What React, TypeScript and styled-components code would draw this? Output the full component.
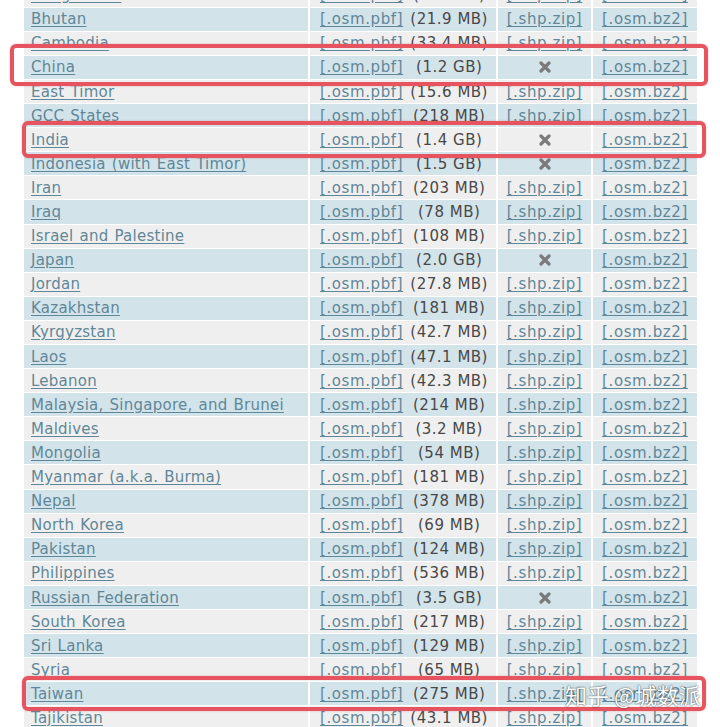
import React from "react";
import styled, { createGlobalStyle } from "styled-components";

interface Region {
  name: string;
  size: string;
  shp: boolean;
}

const regions: Region[] = [
  { name: "Bangladesh", size: "(240 MB)", shp: true },
  { name: "Bhutan", size: "(21.9 MB)", shp: true },
  { name: "Cambodia", size: "(33.4 MB)", shp: true },
  { name: "China", size: "(1.2 GB)", shp: false },
  { name: "East Timor", size: "(15.6 MB)", shp: true },
  { name: "GCC States", size: "(218 MB)", shp: true },
  { name: "India", size: "(1.4 GB)", shp: false },
  { name: "Indonesia (with East Timor)", size: "(1.5 GB)", shp: false },
  { name: "Iran", size: "(203 MB)", shp: true },
  { name: "Iraq", size: "(78 MB)", shp: true },
  { name: "Israel and Palestine", size: "(108 MB)", shp: true },
  { name: "Japan", size: "(2.0 GB)", shp: false },
  { name: "Jordan", size: "(27.8 MB)", shp: true },
  { name: "Kazakhstan", size: "(181 MB)", shp: true },
  { name: "Kyrgyzstan", size: "(42.7 MB)", shp: true },
  { name: "Laos", size: "(47.1 MB)", shp: true },
  { name: "Lebanon", size: "(42.3 MB)", shp: true },
  { name: "Malaysia, Singapore, and Brunei", size: "(214 MB)", shp: true },
  { name: "Maldives", size: "(3.2 MB)", shp: true },
  { name: "Mongolia", size: "(54 MB)", shp: true },
  { name: "Myanmar (a.k.a. Burma)", size: "(181 MB)", shp: true },
  { name: "Nepal", size: "(378 MB)", shp: true },
  { name: "North Korea", size: "(69 MB)", shp: true },
  { name: "Pakistan", size: "(124 MB)", shp: true },
  { name: "Philippines", size: "(536 MB)", shp: true },
  { name: "Russian Federation", size: "(3.5 GB)", shp: false },
  { name: "South Korea", size: "(217 MB)", shp: true },
  { name: "Sri Lanka", size: "(129 MB)", shp: true },
  { name: "Syria", size: "(65 MB)", shp: true },
  { name: "Taiwan", size: "(275 MB)", shp: true },
  { name: "Tajikistan", size: "(43.1 MB)", shp: true },
];

// red annotation boxes drawn over the screenshot
const marks = [
  { left: 10, top: 44, width: 698, height: 42 },
  { left: 22, top: 121, width: 684, height: 37 },
  { left: 22, top: 676, width: 684, height: 35 },
];

const NoIcon: React.FC = () => (
  <svg width="12" height="12" viewBox="0 0 12 12">
    <path
      d="M2 2 L10 10 M10 2 L2 10"
      stroke="#7a7a7a"
      strokeWidth="3.2"
      strokeLinecap="round"
    />
  </svg>
);

const App: React.FC = () => {
  return (
    <>
      <GlobalStyle />
      <Page>
        <StyledTable>
          <colgroup>
            <col style={{ width: 284 }} />
            <col style={{ width: 186 }} />
            <col style={{ width: 93 }} />
            <col style={{ width: 104 }} />
          </colgroup>
          <tbody>
            {regions.map((r, i) => (
              <Row key={r.name} blue={i % 2 === 1}>
                <NameCell>
                  <Link href="#">{r.name}</Link>
                </NameCell>
                <td>
                  <PbfBox>
                    <FileLink href="#">[.osm.pbf]</FileLink>
                    <Size>{r.size}</Size>
                  </PbfBox>
                </td>
                <CenterCell>
                  {r.shp ? <FileLink href="#">[.shp.zip]</FileLink> : <NoIcon />}
                </CenterCell>
                <CenterCell>
                  <FileLink href="#">[.osm.bz2]</FileLink>
                </CenterCell>
              </Row>
            ))}
          </tbody>
        </StyledTable>
        {marks.map((m, i) => (
          <Mark
            key={i}
            style={{ left: m.left, top: m.top, width: m.width, height: m.height }}
          />
        ))}
        <Watermark>知乎 @城数派</Watermark>
      </Page>
    </>
  );
};

export default App;

const GlobalStyle = createGlobalStyle`
  html, body {
    margin: 0;
    padding: 0;
    background: #ffffff;
  }
  * {
    box-sizing: border-box;
  }
`;

const Page = styled.div`
  position: relative;
  width: 720px;
  height: 727px;
  overflow: hidden;
  background: #ffffff;
  font-family: "DejaVu Sans", Verdana, sans-serif;
  font-size: 15px;
`;

const StyledTable = styled.table`
  table-layout: fixed;
  width: 677px;
  margin: -17.4px 0 0 22px;
  border-collapse: separate;
  border-spacing: 2px 1px;

  td {
    padding: 0;
    height: 23.1px;
    white-space: nowrap;
    vertical-align: middle;
  }
`;

const Row = styled.tr<{ blue: boolean }>`
  td {
    background: ${({ blue }) => (blue ? "#d3e3ea" : "#efefef")};
  }
`;

const NameCell = styled.td`
  padding-left: 7px !important;
  letter-spacing: 0.25px;
  word-spacing: 1px;
`;

const CenterCell = styled.td`
  text-align: center;

  svg {
    display: block;
    margin: 0 auto;
  }
`;

const PbfBox = styled.div`
  display: flex;
  align-items: center;
  padding-left: 10px;
`;

const Link = styled.a`
  color: #5f8798;
  text-decoration: underline;
  text-underline-offset: 2px;
`;

const FileLink = styled(Link)`
  letter-spacing: 0.6px;
`;

const Size = styled.span`
  width: 86px;
  margin-left: 3px;
  text-align: center;
  letter-spacing: 0.5px;
  color: #484848;
`;

const Mark = styled.div`
  position: absolute;
  border: 4px solid #e5545f;
  border-radius: 6px;
  box-shadow: 0 0 2px rgba(200, 60, 70, 0.4);
`;

const Watermark = styled.div`
  position: absolute;
  left: 565px;
  top: 678px;
  font-family: "Noto Sans CJK SC", sans-serif;
  font-size: 22px;
  color: #ffffff;
  white-space: nowrap;
  text-shadow: 0 0 2px rgba(0, 0, 0, 0.55), 0 0 1px rgba(0, 0, 0, 0.5);
`;
